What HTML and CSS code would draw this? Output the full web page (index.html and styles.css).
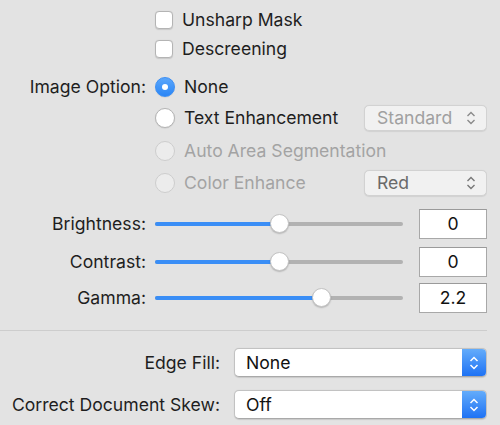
FILE: index.html
```html
<!DOCTYPE html>
<html>
<head>
<meta charset="utf-8">
<meta name="viewport" content="width=device-width, initial-scale=1">
<link rel="stylesheet" href="styles.css">
</head>
<body>
  <div class="panel">
    <div class="row r1">
      <span class="label"></span>
      <span class="check"></span>
      <span class="text">Unsharp Mask</span>
    </div>
    <div class="row">
      <span class="label"></span>
      <span class="check"></span>
      <span class="text">Descreening</span>
    </div>

    <div class="row r3">
      <span class="label">Image Option:</span>
      <span class="radio on"></span>
      <span class="text">None</span>
    </div>
    <div class="row r4">
      <span class="label"></span>
      <span class="radio"></span>
      <span class="text">Text Enhancement</span>
      <div class="popup off">
        <span>Standard</span>
        <svg class="arrows" width="10" height="14" viewBox="0 0 10 14"><path d="M1.5 5 L5 1.5 L8.5 5 M1.5 9 L5 12.5 L8.5 9" fill="none" stroke="#8a8a8a" stroke-width="1.4"/></svg>
      </div>
    </div>
    <div class="row r5">
      <span class="label"></span>
      <span class="radio dis"></span>
      <span class="text gray">Auto Area Segmentation</span>
    </div>
    <div class="row r6">
      <span class="label"></span>
      <span class="radio dis"></span>
      <span class="text gray">Color Enhance</span>
      <div class="popup off dark">
        <span>Red</span>
        <svg class="arrows" width="10" height="14" viewBox="0 0 10 14"><path d="M1.5 5 L5 1.5 L8.5 5 M1.5 9 L5 12.5 L8.5 9" fill="none" stroke="#777" stroke-width="1.4"/></svg>
      </div>
    </div>

    <div class="row r7">
      <span class="label">Brightness:</span>
      <div class="slider">
        <div class="fill" style="width: 50.4%"></div>
        <div class="thumb" style="left: 50.4%"></div>
      </div>
      <div class="field">0</div>
    </div>
    <div class="row r8">
      <span class="label">Contrast:</span>
      <div class="slider">
        <div class="fill" style="width: 50.4%"></div>
        <div class="thumb" style="left: 50.4%"></div>
      </div>
      <div class="field">0</div>
    </div>
    <div class="row r9">
      <span class="label">Gamma:</span>
      <div class="slider">
        <div class="fill" style="width: 67.3%"></div>
        <div class="thumb" style="left: 67.3%"></div>
      </div>
      <div class="field">2.2</div>
    </div>

    <hr class="sep">

    <div class="row r10">
      <span class="label wide">Edge Fill:</span>
      <div class="select">
        <span class="value">None</span>
        <span class="btn"><svg width="10" height="14" viewBox="0 0 10 14"><path d="M1.5 5 L5 1.5 L8.5 5 M1.5 9 L5 12.5 L8.5 9" fill="none" stroke="#fff" stroke-width="1.5"/></svg></span>
      </div>
    </div>
    <div class="row r11">
      <span class="label wide">Correct Document Skew:</span>
      <div class="select">
        <span class="value">Off</span>
        <span class="btn"><svg width="10" height="14" viewBox="0 0 10 14"><path d="M1.5 5 L5 1.5 L8.5 5 M1.5 9 L5 12.5 L8.5 9" fill="none" stroke="#fff" stroke-width="1.5"/></svg></span>
      </div>
    </div>
  </div>
</body>
</html>
```

FILE: styles.css
```css
* {
  box-sizing: border-box;
}

body {
  margin: 0;
  background: #e3e3e3;
  font-family: Inter, "Liberation Sans", Arial, sans-serif;
  font-size: 17.6px;
  color: #1e1e1e;
}

.panel {
  width: 487px;
  padding-top: 5px;
  height: 425px;
  overflow: hidden;
}

/* one line of controls */
.row {
  display: flex;
  align-items: center;
  height: 29px;
}

.r3 { margin-top: 9px; }
.r4 { margin-top: 2px; }
.r5 { margin-top: 4px; }
.r6 { margin-top: 3px; }
.r7 { margin-top: 12px; }
.r8 { margin-top: 9px; }
.r9 { margin-top: 7px; }
.r10 { margin-top: 17px; }
.r11 { margin-top: 13px; }

.label {
  width: 146px;
  flex: none;
  text-align: right;
  margin-right: 9px;
  white-space: nowrap;
}

.label.wide {
  width: 220px;
  margin-right: 14px;
}

.text {
  margin-left: 9px;
  white-space: nowrap;
}

.gray {
  color: #a3a3a3;
}

/* checkbox */
.check {
  width: 18px;
  height: 18px;
  flex: none;
  background: #fff;
  border: 1px solid #b4b4b4;
  border-radius: 4px;
  box-shadow: 0 0.5px 1px rgba(0,0,0,0.12);
}

/* radio buttons */
.radio {
  width: 20px;
  height: 20px;
  flex: none;
  border-radius: 50%;
  background: #fff;
  border: 1px solid #b4b4b4;
  box-shadow: 0 0.5px 1px rgba(0,0,0,0.12);
  display: flex;
  align-items: center;
  justify-content: center;
}

.radio.on {
  background: linear-gradient(#5aa6fb, #2a86f6);
  border-color: #3a8ef5;
}

.radio.on::after {
  content: "";
  width: 6px;
  height: 6px;
  border-radius: 50%;
  background: #fff;
}

.radio.dis {
  background: #ececec;
  border-color: #cdcdcd;
  box-shadow: none;
}

/* small popups */
.popup {
  margin-left: auto;
  width: 123px;
  height: 26px;
  flex: none;
  display: flex;
  align-items: center;
  justify-content: space-between;
  padding: 0 10px 0 12px;
  background: #f1f1f1;
  border: 1px solid #d2d2d2;
  border-radius: 5px;
  box-shadow: 0 0.5px 1px rgba(0,0,0,0.08);
  color: #a0a0a0;
}

.popup.dark {
  color: #6a6a6a;
}

/* sliders */
.slider {
  position: relative;
  width: 248px;
  height: 4px;
  border-radius: 2px;
  background: #b2b2b2;
  flex: none;
}

.fill {
  height: 4px;
  border-radius: 2px;
  background: #3a8ef6;
}

.thumb {
  position: absolute;
  top: -8px;
  width: 19px;
  height: 19px;
  margin-left: -9.5px;
  border-radius: 50%;
  background: #fff;
  border: 1px solid #c4c4c4;
  box-shadow: 0 1px 1.5px rgba(0,0,0,0.2);
}

.field {
  margin-left: 16px;
  width: 68px;
  height: 30px;
  flex: none;
  background: #fff;
  border: 1px solid #a8a8a8;
  border-top-color: #9a9a9a;
  display: flex;
  align-items: center;
  justify-content: center;
  color: #111;
}

.sep {
  margin: 18px 0 0 0;
  border: none;
  border-top: 1px solid #cdcdcd;
  height: 0;
}

/* big popups */
.select {
  width: 253px;
  height: 29px;
  flex: none;
  display: flex;
  background: #fff;
  border: 1px solid #c2c2c2;
  border-bottom-color: #a9a9a9;
  border-radius: 5px;
  box-shadow: 0 0.5px 1px rgba(0,0,0,0.12);
  overflow: hidden;
}

.select .value {
  flex: 1;
  display: flex;
  align-items: center;
  padding-left: 11px;
  color: #111;
}

.select .btn {
  width: 24px;
  display: flex;
  align-items: center;
  justify-content: center;
  background: linear-gradient(#63acfb, #1e72f4);
}
```
